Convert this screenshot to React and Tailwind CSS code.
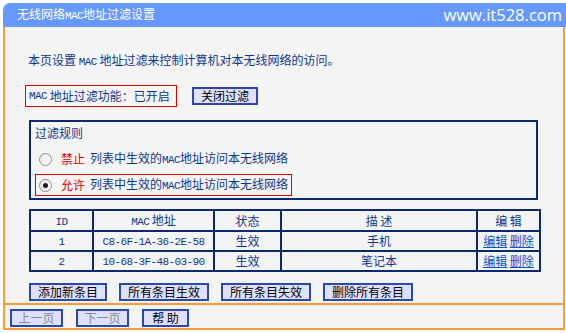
import React from 'react'

// Latin bits inside Chinese text render as narrow monospace, like SimSun half-width glyphs
const M = ({ children }) => (
  <span className="font-['Liberation_Mono',monospace] text-[11px] tracking-[-0.6px]">{children}</span>
)

const NAVY = 'text-[#10378f]'

const Btn = ({ children, w, dim }) => (
  <div
    className={`flex h-[18px] items-center justify-center border-2 border-[#2a48b0] bg-[#dee0fd] text-[12px] leading-none ${dim ? 'text-[#8a8a8a]' : 'text-black'}`}
    style={{ width: w }}
  >
    {children}
  </div>
)

const Radio = ({ checked }) => (
  <span className="relative flex h-[13px] w-[13px] items-center justify-center rounded-full border border-[#8c8c8c] bg-gradient-to-br from-[#e6e6e6] to-white">
    {checked && <span className="h-[5px] w-[5px] rounded-full bg-[#1a1a1a]" />}
  </span>
)

const RULES = [
  { word: '禁止', checked: false },
  { word: '允许', checked: true },
]

const ENTRIES = [
  { id: 1, mac: 'C8-6F-1A-36-2E-58', status: '生效', desc: '手机' },
  { id: 2, mac: '10-68-3F-48-03-90', status: '生效', desc: '笔记本' },
]

export default function App() {
  return (
    <div className="h-[333px] w-[566px] overflow-hidden bg-white pt-[3px] font-['Noto_Sans_CJK_SC',sans-serif] text-[12px]">
      {/* title bar */}
      <div className="ml-[3px] flex h-[24px] items-center justify-between rounded-tl-[7px] bg-[#6699ff] pl-[14px] pr-[4px]">
        <span className="text-[12px] leading-none text-white">
          无线网络<M>MAC</M>地址过滤设置
        </span>
        <span className="font-['Open_Sans',sans-serif] text-[16.5px] leading-none text-white">www.it528.com</span>
      </div>

      <div className="ml-[3px] w-[562px] border-x-2 border-[#ff9a33] bg-[#f4f4f4]">
        <div className="h-[278px] border-b-2 border-[#ff9a33] pt-[25px]">
          <p className={`pl-[23px] leading-[16px] ${NAVY}`}>
            本页设置 <M>MAC</M> 地址过滤来控制计算机对本无线网络的访问。
          </p>

          <div className="mt-[15px] flex items-center pl-[20px]">
            <div className={`flex h-[22px] w-[152px] items-center border border-[#e00000] pl-[3px] ${NAVY}`}>
              <M>MAC</M>&nbsp;地址过滤功能：已开启
            </div>
            <div className="ml-[15px]">
              <Btn w={66}>关闭过滤</Btn>
            </div>
          </div>

          {/* filter rules */}
          <div className="ml-[24px] mt-[13px] h-[80px] w-[509px] border-2 border-[#0b2a6b] pl-[4px] pt-[3px]">
            <div className={`leading-[16px] ${NAVY}`}>过滤规则</div>
            <div className="mt-[7px] flex flex-col gap-[4px]">
              {RULES.map(r => (
                <div
                  key={r.word}
                  className={`flex h-[22px] w-[257px] items-center pl-[3px] ${r.checked ? 'border border-[#e00000]' : 'border border-transparent'}`}
                >
                  <Radio checked={r.checked} />
                  <span className="ml-[9px] text-[#e00000]">{r.word}</span>
                  <span className={`ml-[5px] ${NAVY}`}>
                    列表中生效的<M>MAC</M>地址访问本无线网络
                  </span>
                </div>
              ))}
            </div>
          </div>

          {/* entry table */}
          <table className={`ml-[24px] mt-[9px] w-[510px] table-fixed border-collapse border-2 border-[#0b2a6b] text-center ${NAVY}`}>
            <colgroup>
              <col className="w-[63px]" />
              <col className="w-[121px]" />
              <col className="w-[67px]" />
              <col className="w-[196px]" />
              <col className="w-[63px]" />
            </colgroup>
            <thead>
              <tr className="h-[21px]">
                <th className="border-2 border-[#0b2a6b] p-0 font-normal leading-none"><M>ID</M></th>
                <th className="border-2 border-[#0b2a6b] p-0 font-normal leading-none"><M>MAC</M> 地址</th>
                <th className="border-2 border-[#0b2a6b] p-0 font-normal leading-none">状态</th>
                <th className="border-2 border-[#0b2a6b] p-0 font-normal leading-none">描 述</th>
                <th className="border-2 border-[#0b2a6b] p-0 font-normal leading-none">编 辑</th>
              </tr>
            </thead>
            <tbody>
              {ENTRIES.map(e => (
                <tr key={e.id} className="h-[20px]">
                  <td className="border-2 border-[#0b2a6b] p-0 leading-none"><M>{e.id}</M></td>
                  <td className="border-2 border-[#0b2a6b] p-0 leading-none"><M>{e.mac}</M></td>
                  <td className="border-2 border-[#0b2a6b] p-0 leading-none">{e.status}</td>
                  <td className="border-2 border-[#0b2a6b] p-0 leading-none">{e.desc}</td>
                  <td className="border-2 border-[#0b2a6b] p-0 leading-none text-[#0a52cc]">
                    <span className="underline">编辑</span>&nbsp;<span className="underline">删除</span>
                  </td>
                </tr>
              ))}
            </tbody>
          </table>

          <div className="ml-[24px] mt-[11px] flex gap-[12px]">
            <Btn w={78}>添加新条目</Btn>
            <Btn w={90}>所有条目生效</Btn>
            <Btn w={90}>所有条目失效</Btn>
            <Btn w={90}>删除所有条目</Btn>
          </div>
        </div>

        {/* paging */}
        <div className="flex h-[25px] gap-[13px] border-b-2 border-[#ff9a33] pl-[5px] pt-[4px]">
          <Btn w={53} dim>上一页</Btn>
          <Btn w={53} dim>下一页</Btn>
          <Btn w={47}>帮&nbsp;助</Btn>
        </div>
      </div>
    </div>
  )
}
